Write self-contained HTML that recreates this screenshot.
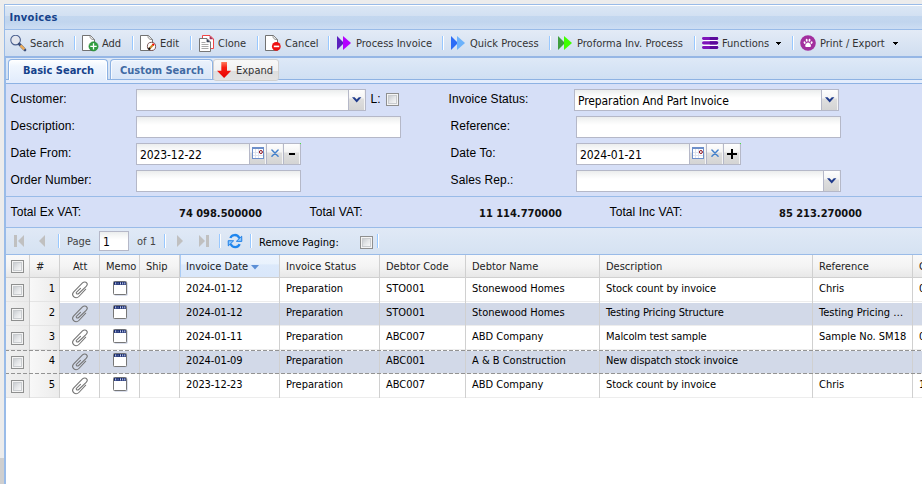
<!DOCTYPE html>
<html><head><meta charset="utf-8"><title>Invoices</title>
<style>
*{box-sizing:border-box;margin:0;padding:0}
html,body{width:922px;height:484px;overflow:hidden;background:#ececec}
body{position:relative;font-family:"DejaVu Sans Condensed","DejaVu Sans","Liberation Sans",sans-serif;font-size:11px;color:#222;font-stretch:condensed}
div,span,svg{position:absolute}
.t{white-space:nowrap;line-height:14px;height:14px}
  .a{font-family:"Liberation Sans",sans-serif;font-size:12px;color:#000;letter-spacing:0.08px;margin-left:-0.4px}
#hdr{left:5px;top:5px;width:917px;height:24px;background:linear-gradient(#fff 0,#fff 1px,#dbe7f5 1px,#d2e0f2 11px,#c3d7ef 11px,#c1d5ee 17px,#ccddf3 24px)}
#tb{left:5px;top:30px;width:917px;height:26px;background:linear-gradient(#e3ebf6,#d0def0)}
  .bt{top:37px;font-size:11px;color:#333}
.sep{top:36px;width:2px;height:14px;border-left:1px solid #98c8ff;border-right:1px solid #fff}
.inp{height:22px;border:1px solid #b5b8c8;background:#fff linear-gradient(#ebeded 0,#f6f7f7 4px,#fff 8px);}
.ft{font-size:12px;color:#000;line-height:16px;height:16px;white-space:nowrap}
.trg{width:17px;height:22px;border:1px solid #b5b8c8;border-left:0;background:linear-gradient(#fefefe 0,#f4f4f4 42%,#dfdfdf 43%,#d4d4d4 100%);box-shadow:inset -1px 0 0 #f4f4f4}
.tot{font-weight:bold;font-size:11px;color:#111}
.hd{top:260px;font-size:11px;color:#222;font-stretch:condensed}
.vl{top:255px;width:1px;height:143px;background:#d0d0d0}
.row{left:5px;width:917px;height:24px}
.c{font-size:11px;color:#000}
.d{letter-spacing:-0.1px}
.cb{width:13px;height:13px;border:1px solid #8e8f8f;background:linear-gradient(135deg,#c3c7cb 10%,#e4e6e8 50%,#fcfcfc 90%);box-shadow:inset 0 0 0 1px #f4f4f4, inset 0 0 0 2px #c9cccf}
</style></head><body>
<div style="left:4px;top:4px;width:920px;height:482px;border:1px solid #99bbe8;background:#fff"></div>
<div id="hdr"></div>
<div style="left:5px;top:29px;width:917px;height:1px;background:#99bbe8"></div>
<span class="t" style="left:9.5px;top:11px;font-weight:bold;color:#15428b;font-size:11px;letter-spacing:0.3px">Invoices</span>
<div id="tb"></div>
<div style="left:5px;top:56px;width:917px;height:1px;background:#95b6e5"></div>
<span class="t bt" style="left:30px">Search</span>
<span class="t bt" style="left:102px">Add</span>
<span class="t bt" style="left:160px">Edit</span>
<span class="t bt" style="left:218px">Clone</span>
<span class="t bt" style="left:285px">Cancel</span>
<span class="t bt" style="left:356px">Process Invoice</span>
<span class="t bt" style="left:470px">Quick Process</span>
<span class="t bt" style="left:577px">Proforma Inv. Process</span>
<span class="t bt" style="left:722px">Functions</span>
<span class="t bt" style="left:820px">Print / Export</span>
<div class="sep" style="left:74px"></div>
<div class="sep" style="left:132px"></div>
<div class="sep" style="left:190px"></div>
<div class="sep" style="left:257px"></div>
<div class="sep" style="left:328px"></div>
<div class="sep" style="left:442px"></div>
<div class="sep" style="left:549px"></div>
<div class="sep" style="left:694px"></div>
<div class="sep" style="left:792px"></div>
<svg style="left:776px;top:42px" width="5" height="3" viewBox="0 0 5 3" shape-rendering="crispEdges"><path d="M0 0h5v1h-1v1h-1v1h-1v-1h-1v-1h-1z" fill="#000"/></svg>
<svg style="left:893px;top:42px" width="5" height="3" viewBox="0 0 5 3" shape-rendering="crispEdges"><path d="M0 0h5v1h-1v1h-1v1h-1v-1h-1v-1h-1z" fill="#000"/></svg>
<div style="left:5px;top:57px;width:917px;height:1px;background:#95b6e5"></div>
<div style="left:5px;top:58px;width:917px;height:21px;background:linear-gradient(#dee9f7,#cfdff3)"></div>
<div style="left:5px;top:79px;width:917px;height:5px;background:#e4edfc;border-top:1px solid #8db2e3;border-bottom:1px solid #8db2e3"></div>
<div style="left:8px;top:59px;width:100px;height:21px;border:1px solid #8db2e3;border-bottom:0;border-radius:4px 4px 0 0;background:linear-gradient(#fff,#f0f6fe 30%,#e3edfc);box-shadow:inset 1px 1px 0 #fff,inset -1px 0 0 #fff"></div>
<span class="t" style="left:23px;top:64px;font-weight:bold;color:#15428b;font-size:11px">Basic Search</span>
<div style="left:110px;top:59px;width:103px;height:20px;border:1px solid #8db2e3;border-bottom:0;border-radius:4px 4px 0 0;background:linear-gradient(#ebf2fc,#d8e5f7);box-shadow:inset 1px 1px 0 #f5f9fe,inset -1px 0 0 #f5f9fe"></div>
<span class="t" style="left:120px;top:64px;font-weight:bold;color:#416aa3;font-size:11px">Custom Search</span>
<div style="left:213px;top:59px;width:66px;height:22px;border:1px solid #d0d0d0;border-radius:3px;background:linear-gradient(#f8f8f8 0,#f1f1f1 55%,#dedede 56%,#e2e2e2)"></div>
<span class="t" style="left:236px;top:64px;color:#333;font-size:11px">Expand</span>
<div style="left:5px;top:84px;width:917px;height:112px;background:#d6dff7"></div>
<div style="left:5px;top:196px;width:917px;height:1px;background:#99bbe8"></div>
<div style="left:5px;top:197px;width:917px;height:30px;background:#d6dff7"></div>
<div style="left:5px;top:227px;width:917px;height:1px;background:#99bbe8"></div>
<span class="t a" style="left:11px;top:92px">Customer:</span>
<span class="t a" style="left:11px;top:119px">Description:</span>
<span class="t a" style="left:11px;top:146px">Date From:</span>
<span class="t a" style="left:11px;top:173px">Order Number:</span>
<span class="t a" style="left:449px;top:92px">Invoice Status:</span>
<span class="t a" style="left:451px;top:119px">Reference:</span>
<span class="t a" style="left:451px;top:146px">Date To:</span>
<span class="t a" style="left:451px;top:173px">Sales Rep.:</span>
<span class="t a" style="left:371px;top:92px">L:</span>
<span class="t a" style="left:11px;top:205px">Total Ex VAT:</span>
<span class="t a" style="left:310px;top:205px">Total VAT:</span>
<span class="t a" style="left:610px;top:205px">Total Inc VAT:</span>
<span class="t tot" style="left:179px;top:207px">74 098.500000</span>
<span class="t tot" style="left:479px;top:207px">11 114.770000</span>
<span class="t tot" style="left:779px;top:207px">85 213.270000</span>
<div class="inp" style="left:136px;top:89px;width:213px"></div><div class="trg" style="left:349px;top:89px"></div>
<div class="inp" style="left:136px;top:116px;width:265px"></div>
<div class="inp" style="left:136px;top:143px;width:114px"></div>
<div class="inp" style="left:136px;top:170px;width:165px"></div>
<div class="inp" style="left:574px;top:89px;width:248px"></div><div class="trg" style="left:822px;top:89px"></div>
<div class="inp" style="left:576px;top:116px;width:265px"></div>
<div class="inp" style="left:576px;top:143px;width:114px"></div>
<div class="inp" style="left:576px;top:170px;width:248px"></div><div class="trg" style="left:824px;top:170px"></div>
<span class="ft" style="left:140px;top:147px;letter-spacing:-0.1px">2023-12-22</span>
<span class="ft" style="left:580px;top:147px;letter-spacing:-0.1px">2024-01-21</span>
<span class="ft" style="left:578px;top:93px;letter-spacing:-0.1px">Preparation And Part Invoice</span>
<div class="trg" style="left:250px;top:143px"></div>
<div class="trg" style="left:267px;top:143px"></div>
<div class="trg" style="left:284px;top:143px"></div>
<div class="trg" style="left:690px;top:143px"></div>
<div class="trg" style="left:707px;top:143px"></div>
<div class="trg" style="left:724px;top:143px"></div>
<div class="cb" style="left:386px;top:93px"></div>
<div style="left:5px;top:228px;width:917px;height:26px;background:linear-gradient(#e0e9f6,#d5e2f2)"></div>
<div style="left:5px;top:254px;width:917px;height:1px;background:#99bbe8"></div>
<div class="sep" style="left:58px;top:234px"></div>
<div class="sep" style="left:164px;top:234px"></div>
<div class="sep" style="left:219px;top:234px"></div>
<div class="sep" style="left:250px;top:234px"></div>
<div class="sep" style="left:377px;top:234px"></div>
<span class="t" style="left:67px;top:235px;color:#444">Page</span>
<div class="inp" style="left:99px;top:231px;width:30px;height:20px"></div>
<span class="t" style="left:103px;top:235px;color:#000;font-size:12px">1</span>
<span class="t" style="left:137px;top:235px;color:#444">of 1</span>
<span class="t" style="left:259px;top:236px;color:#000;font-family:"Liberation Sans",sans-serif;font-size:11px;letter-spacing:0.25px">Remove Paging:</span>
<div class="cb" style="left:360px;top:236px"></div>
<div style="left:5px;top:255px;width:917px;height:22px;background:linear-gradient(#f9f9f9,#f4f4f4 50%,#e8e8e8)"></div>
<div style="left:5px;top:277px;width:917px;height:1px;background:#d0d0d0"></div>
<div style="left:180px;top:255px;width:100px;height:22px;background:linear-gradient(#edf4fe 0,#e9f2fd 40%,#dce9fb 45%,#d9e7fa 100%);border:1px solid #aaccf6;border-top:0;border-bottom:0"></div>
<span class="t hd" style="left:36px">#</span>
<span class="t hd" style="left:73px">Att</span>
<span class="t hd" style="left:106px">Memo</span>
<span class="t hd" style="left:146px">Ship</span>
<span class="t hd" style="left:186px">Invoice Date</span>
<span class="t hd" style="left:286px">Invoice Status</span>
<span class="t hd" style="left:386px">Debtor Code</span>
<span class="t hd" style="left:472px">Debtor Name</span>
<span class="t hd" style="left:606px">Description</span>
<span class="t hd" style="left:819px">Reference</span>
<span class="t hd" style="left:919px">C</span>
<svg style="left:250.5px;top:265px" width="9" height="5" viewBox="0 0 9 5"><path d="M0 0h8L4 4.4z" fill="#5b8fd6"/></svg>
<div class="cb" style="left:11px;top:260px"></div>
<div class="row" style="top:278px;background:#fff;border-top:1px solid #fff;border-bottom:1px solid #ededed"></div>
<div class="row" style="top:302px;background:#d2d9e8;border-top:1px solid #fff;border-bottom:1px solid #ededed"></div>
<div class="row" style="top:326px;background:#fff;border-top:1px solid #fff;border-bottom:1px solid #ededed"></div>
<div class="row" style="top:350px;background:#d2d9e8;border-top:1px solid #fff;border-bottom:1px solid #ededed"></div>
<div class="row" style="top:374px;background:#fff;border-top:1px solid #fff;border-bottom:1px solid #ededed"></div>
<div style="left:6px;top:278px;width:24px;height:120px;background:linear-gradient(90deg,#f0f0f0,#eaeaea)"></div>
<div style="left:30px;top:278px;width:30px;height:120px;background:linear-gradient(90deg,#f8f8f8,#ebebeb)"></div>
<div style="left:0;top:458px;width:4px;height:26px;background:#cfcfcf"></div>
<div style="left:5px;top:301px;width:55px;height:1px;background:#e4e4e4"></div>
<div style="left:5px;top:325px;width:55px;height:1px;background:#e4e4e4"></div>
<div style="left:5px;top:349px;width:55px;height:1px;background:#e4e4e4"></div>
<div style="left:5px;top:397px;width:55px;height:1px;background:#e4e4e4"></div>
<div class="cb" style="left:11px;top:284px"></div>
<span class="t c" style="left:30px;width:25px;text-align:right;top:282px">1</span>
<span class="t c d" style="left:186px;top:282px">2024-01-12</span>
<span class="t c" style="left:286px;top:282px">Preparation</span>
<span class="t c" style="left:386px;top:282px">STO001</span>
<span class="t c" style="left:472px;top:282px">Stonewood Homes</span>
<span class="t c d" style="left:606px;top:282px">Stock count by invoice</span>
<span class="t c" style="left:819px;top:282px">Chris</span>
<span class="t c" style="left:919px;top:282px">0</span>
<svg style="left:68.4px;top:278.7px" width="24" height="22" viewBox="0 0 24 22"><path d="M17.7 10.2L10.9 17.5C9.2 19.3 6.6 19 5.4 17.4C4.2 15.9 4.4 14.4 5.5 13.2L14.5 3.9C15.9 2.5 17.8 2.7 18.7 3.9C19.7 5.1 19.3 6.3 18.2 7.3L10.7 14.5C9.9 15.3 9 15.2 8.5 14.6C8 14 8.1 13.6 8.6 13.2L12.5 9.3" fill="none" stroke="#757575" stroke-width="1.05" stroke-linecap="round"/></svg><svg style="left:113px;top:281px" width="16" height="16" viewBox="0 0 16 16"><rect x="1.3" y="1.3" width="13.4" height="13.4" rx="1.2" fill="#cdd4e6"/><rect x="0.5" y="0.5" width="13" height="13" rx="0.8" fill="#fff" stroke="#777" stroke-width="1"/><rect x="1" y="0.9" width="12" height="3" fill="#16296f"/><path d="M2.7 1.4V3.4M7.5 1.4V3.4M9.7 1.4V3.4M11.8 1.4V3.4" stroke="#dfe8ff" stroke-width="0.9"/><path d="M5.1 1.6V3.2" stroke="#7f8fc0" stroke-width="0.9"/></svg>
<div class="cb" style="left:11px;top:308px"></div>
<span class="t c" style="left:30px;width:25px;text-align:right;top:306px">2</span>
<span class="t c d" style="left:186px;top:306px">2024-01-12</span>
<span class="t c" style="left:286px;top:306px">Preparation</span>
<span class="t c" style="left:386px;top:306px">STO001</span>
<span class="t c" style="left:472px;top:306px">Stonewood Homes</span>
<span class="t c d" style="left:606px;top:306px">Testing Pricing Structure</span>
<span class="t c" style="left:819px;top:306px">Testing Pricing …</span>
<svg style="left:68.4px;top:302.7px" width="24" height="22" viewBox="0 0 24 22"><path d="M17.7 10.2L10.9 17.5C9.2 19.3 6.6 19 5.4 17.4C4.2 15.9 4.4 14.4 5.5 13.2L14.5 3.9C15.9 2.5 17.8 2.7 18.7 3.9C19.7 5.1 19.3 6.3 18.2 7.3L10.7 14.5C9.9 15.3 9 15.2 8.5 14.6C8 14 8.1 13.6 8.6 13.2L12.5 9.3" fill="none" stroke="#757575" stroke-width="1.05" stroke-linecap="round"/></svg><svg style="left:113px;top:305px" width="16" height="16" viewBox="0 0 16 16"><rect x="1.3" y="1.3" width="13.4" height="13.4" rx="1.2" fill="#cdd4e6"/><rect x="0.5" y="0.5" width="13" height="13" rx="0.8" fill="#fff" stroke="#777" stroke-width="1"/><rect x="1" y="0.9" width="12" height="3" fill="#16296f"/><path d="M2.7 1.4V3.4M7.5 1.4V3.4M9.7 1.4V3.4M11.8 1.4V3.4" stroke="#dfe8ff" stroke-width="0.9"/><path d="M5.1 1.6V3.2" stroke="#7f8fc0" stroke-width="0.9"/></svg>
<div class="cb" style="left:11px;top:332px"></div>
<span class="t c" style="left:30px;width:25px;text-align:right;top:330px">3</span>
<span class="t c d" style="left:186px;top:330px">2024-01-11</span>
<span class="t c" style="left:286px;top:330px">Preparation</span>
<span class="t c" style="left:386px;top:330px">ABC007</span>
<span class="t c" style="left:472px;top:330px">ABD Company</span>
<span class="t c d" style="left:606px;top:330px">Malcolm test sample</span>
<span class="t c" style="left:819px;top:330px">Sample No. SM18</span>
<span class="t c" style="left:919px;top:330px">0</span>
<svg style="left:68.4px;top:326.7px" width="24" height="22" viewBox="0 0 24 22"><path d="M17.7 10.2L10.9 17.5C9.2 19.3 6.6 19 5.4 17.4C4.2 15.9 4.4 14.4 5.5 13.2L14.5 3.9C15.9 2.5 17.8 2.7 18.7 3.9C19.7 5.1 19.3 6.3 18.2 7.3L10.7 14.5C9.9 15.3 9 15.2 8.5 14.6C8 14 8.1 13.6 8.6 13.2L12.5 9.3" fill="none" stroke="#757575" stroke-width="1.05" stroke-linecap="round"/></svg><svg style="left:113px;top:329px" width="16" height="16" viewBox="0 0 16 16"><rect x="1.3" y="1.3" width="13.4" height="13.4" rx="1.2" fill="#cdd4e6"/><rect x="0.5" y="0.5" width="13" height="13" rx="0.8" fill="#fff" stroke="#777" stroke-width="1"/><rect x="1" y="0.9" width="12" height="3" fill="#16296f"/><path d="M2.7 1.4V3.4M7.5 1.4V3.4M9.7 1.4V3.4M11.8 1.4V3.4" stroke="#dfe8ff" stroke-width="0.9"/><path d="M5.1 1.6V3.2" stroke="#7f8fc0" stroke-width="0.9"/></svg>
<div class="cb" style="left:11px;top:356px"></div>
<span class="t c" style="left:30px;width:25px;text-align:right;top:354px">4</span>
<span class="t c d" style="left:186px;top:354px">2024-01-09</span>
<span class="t c" style="left:286px;top:354px">Preparation</span>
<span class="t c" style="left:386px;top:354px">ABC001</span>
<span class="t c" style="left:472px;top:354px">A &amp; B Construction</span>
<span class="t c d" style="left:606px;top:354px">New dispatch stock invoice</span>
<svg style="left:68.4px;top:350.7px" width="24" height="22" viewBox="0 0 24 22"><path d="M17.7 10.2L10.9 17.5C9.2 19.3 6.6 19 5.4 17.4C4.2 15.9 4.4 14.4 5.5 13.2L14.5 3.9C15.9 2.5 17.8 2.7 18.7 3.9C19.7 5.1 19.3 6.3 18.2 7.3L10.7 14.5C9.9 15.3 9 15.2 8.5 14.6C8 14 8.1 13.6 8.6 13.2L12.5 9.3" fill="none" stroke="#757575" stroke-width="1.05" stroke-linecap="round"/></svg><svg style="left:113px;top:353px" width="16" height="16" viewBox="0 0 16 16"><rect x="1.3" y="1.3" width="13.4" height="13.4" rx="1.2" fill="#cdd4e6"/><rect x="0.5" y="0.5" width="13" height="13" rx="0.8" fill="#fff" stroke="#777" stroke-width="1"/><rect x="1" y="0.9" width="12" height="3" fill="#16296f"/><path d="M2.7 1.4V3.4M7.5 1.4V3.4M9.7 1.4V3.4M11.8 1.4V3.4" stroke="#dfe8ff" stroke-width="0.9"/><path d="M5.1 1.6V3.2" stroke="#7f8fc0" stroke-width="0.9"/></svg>
<div class="cb" style="left:11px;top:380px"></div>
<span class="t c" style="left:30px;width:25px;text-align:right;top:378px">5</span>
<span class="t c d" style="left:186px;top:378px">2023-12-23</span>
<span class="t c" style="left:286px;top:378px">Preparation</span>
<span class="t c" style="left:386px;top:378px">ABC007</span>
<span class="t c" style="left:472px;top:378px">ABD Company</span>
<span class="t c d" style="left:606px;top:378px">Stock count by invoice</span>
<span class="t c" style="left:819px;top:378px">Chris</span>
<span class="t c" style="left:919px;top:378px">1</span>
<svg style="left:68.4px;top:374.7px" width="24" height="22" viewBox="0 0 24 22"><path d="M17.7 10.2L10.9 17.5C9.2 19.3 6.6 19 5.4 17.4C4.2 15.9 4.4 14.4 5.5 13.2L14.5 3.9C15.9 2.5 17.8 2.7 18.7 3.9C19.7 5.1 19.3 6.3 18.2 7.3L10.7 14.5C9.9 15.3 9 15.2 8.5 14.6C8 14 8.1 13.6 8.6 13.2L12.5 9.3" fill="none" stroke="#757575" stroke-width="1.05" stroke-linecap="round"/></svg><svg style="left:113px;top:377px" width="16" height="16" viewBox="0 0 16 16"><rect x="1.3" y="1.3" width="13.4" height="13.4" rx="1.2" fill="#cdd4e6"/><rect x="0.5" y="0.5" width="13" height="13" rx="0.8" fill="#fff" stroke="#777" stroke-width="1"/><rect x="1" y="0.9" width="12" height="3" fill="#16296f"/><path d="M2.7 1.4V3.4M7.5 1.4V3.4M9.7 1.4V3.4M11.8 1.4V3.4" stroke="#dfe8ff" stroke-width="0.9"/><path d="M5.1 1.6V3.2" stroke="#7f8fc0" stroke-width="0.9"/></svg>
<div class="vl" style="left:29px"></div>
<div class="vl" style="left:59px"></div>
<div class="vl" style="left:99px"></div>
<div class="vl" style="left:139px"></div>
<div class="vl" style="left:179px"></div>
<div class="vl" style="left:279px"></div>
<div class="vl" style="left:379px"></div>
<div class="vl" style="left:465px"></div>
<div class="vl" style="left:599px"></div>
<div class="vl" style="left:812px"></div>
<div class="vl" style="left:912px"></div>
<div style="left:5px;top:350px;width:917px;height:1px;background:repeating-linear-gradient(90deg,#939393 0,#939393 3.6px,transparent 3.6px,transparent 6px)"></div>
<div style="left:5px;top:373px;width:917px;height:1px;background:repeating-linear-gradient(90deg,#939393 0,#939393 3.6px,transparent 3.6px,transparent 6px)"></div>
<div style="left:5px;top:57px;width:1px;height:430px;background:#99bbe8"></div>
<div style="left:300px;top:143px;width:1px;height:1px;background:#4be04b"></div><div style="left:740px;top:143px;width:1px;height:1px;background:#4be04b"></div>
<svg style="left:10px;top:35px" width="17" height="17" viewBox="0 0 17 17"><circle cx="5.6" cy="5.1" r="4.8" fill="#e3e6ee" stroke="#4a5f8e" stroke-width="1.1"/><path d="M9.2 9L15 15" stroke="#3d4f7a" stroke-width="2.7" stroke-linecap="round"/><path d="M10.5 10.4L14.4 14.4" stroke="#eaaa58" stroke-width="2.4"/></svg><svg style="left:82px;top:35px" width="18" height="17" viewBox="0 0 18 17"><path d="M0.5 0.5H8.5L12.5 4.5V15.5H0.5Z" fill="#fff" stroke="#6a6a6a" stroke-width="0.95"/><path d="M8.2 0.8C7.6 2.6 8.8 4.6 12.2 4.6" fill="#ececec" stroke="#777" stroke-width="0.8"/><circle cx="11.5" cy="11.4" r="4.6" fill="#2f9e3f" stroke="#258a35" stroke-width="0.6"/><path d="M11.5 8.2V14.6M8.3 11.4H14.7" stroke="#fff" stroke-width="1.3"/></svg><svg style="left:140px;top:35px" width="18" height="17" viewBox="0 0 18 17"><path d="M0.5 0.5H8.5L12.5 4.5V15.5H0.5Z" fill="#fff" stroke="#6a6a6a" stroke-width="0.95"/><path d="M8.2 0.8C7.6 2.6 8.8 4.6 12.2 4.6" fill="#ececec" stroke="#777" stroke-width="0.8"/><circle cx="11.5" cy="11.4" r="4.1" fill="#fff" stroke="#6e4444" stroke-width="0.9"/><path d="M9.1 13.9L13.6 9.2" stroke="#c8892c" stroke-width="2.1"/><path d="M12.8 10.1L13.9 8.9" stroke="#f00" stroke-width="2.1"/><path d="M8.6 14.4L9.9 13.1" stroke="#111" stroke-width="2.1"/></svg><svg style="left:199px;top:34.5px" width="16" height="17" viewBox="0 0 16 17"><path d="M3.5 0.5H11L14.5 4V13.5H3.5Z" fill="#fff" stroke="#f04545" stroke-width="1"/><path d="M10.6 0.6V4.2H14.3Z" fill="#a8325a"/><path d="M0.5 3.5H8L11.5 7V16.5H0.5Z" fill="#fff" stroke="#707070" stroke-width="0.95"/><path d="M7.6 3.6V7.3H11.3Z" fill="#3a4458"/><path d="M2.5 7.5H6.5M2.5 9.5H9.5M2.5 11.5H9.5M2.5 13.5H9.5" stroke="#aaa" stroke-width="1"/></svg><svg style="left:265px;top:35px" width="18" height="17" viewBox="0 0 18 17"><path d="M0.5 0.5H8.5L12.5 4.5V15.5H0.5Z" fill="#fff" stroke="#6a6a6a" stroke-width="0.95"/><path d="M8.2 0.8C7.6 2.6 8.8 4.6 12.2 4.6" fill="#ececec" stroke="#777" stroke-width="0.8"/><circle cx="11.3" cy="11.4" r="4.4" fill="#ee1111"/><path d="M8.8 11.4H14.2" stroke="#fff" stroke-width="1.6"/></svg><svg style="left:336px;top:35px" width="16" height="16" viewBox="0 0 16 16"><path d="M1 1L8 8L1 15Z" fill="#5a20be"/><path d="M7 1L15 8L7 15Z" fill="#b400ff"/></svg><svg style="left:450px;top:35px" width="16" height="16" viewBox="0 0 16 16"><path d="M1 1L8 8L1 15Z" fill="#2c6cf6"/><path d="M7 1L15 8L7 15Z" fill="#6cb2fb"/></svg><svg style="left:557px;top:35px" width="16" height="16" viewBox="0 0 16 16"><path d="M1 1L8 8L1 15Z" fill="#3f9e3f"/><path d="M7 1L15 8L7 15Z" fill="#40ff00"/></svg><svg style="left:702px;top:37px" width="17" height="12" viewBox="0 0 17 12"><rect x="0.6" y="1.5" width="15" height="9" fill="#fff"/><rect x="0" y="0.1" width="16.2" height="2.8" rx="1.4" fill="#7e14ba"/><path d="M7.8 0.1H14.799999999999999A1.4 1.4 0 0 1 14.799999999999999 2.9H7.8Z" fill="#5a0a9b"/><rect x="0" y="4.2" width="16.2" height="3.2" rx="1.6" fill="#7e14ba"/><path d="M7.8 4.2H14.6A1.6 1.6 0 0 1 14.6 7.4H7.8Z" fill="#5a0a9b"/><rect x="0" y="9.0" width="16.2" height="2.9" rx="1.45" fill="#7e14ba"/><path d="M7.8 9.0H14.75A1.45 1.45 0 0 1 14.75 11.9H7.8Z" fill="#5a0a9b"/></svg><svg style="left:800px;top:34.8px" width="16" height="16" viewBox="0 0 16 16"><circle cx="8" cy="8" r="7.8" fill="#a22e9e"/><ellipse cx="4.6" cy="7.6" rx="0.95" ry="1.35" fill="#fff" transform="rotate(-25 4.6 7.6)"/><ellipse cx="6.7" cy="5.3" rx="0.95" ry="1.45" fill="#fff" transform="rotate(-8 6.7 5.3)"/><ellipse cx="9.5" cy="5.3" rx="0.95" ry="1.45" fill="#fff" transform="rotate(8 9.5 5.3)"/><ellipse cx="11.6" cy="7.6" rx="0.95" ry="1.35" fill="#fff" transform="rotate(25 11.6 7.6)"/><path d="M8.1 7.6C9.6 7.6 11 9.6 11 11C11 12.2 9.8 12 8.1 12C6.4 12 5.2 12.2 5.2 11C5.2 9.6 6.6 7.6 8.1 7.6Z" fill="#fff"/></svg><svg style="left:217px;top:62px" width="15" height="16" viewBox="0 0 15 16"><defs><linearGradient id="rg" x1="0" y1="0" x2="0" y2="1"><stop offset="0" stop-color="#ff7a5c"/><stop offset="0.35" stop-color="#f81e12"/><stop offset="1" stop-color="#e60000"/></linearGradient></defs><path d="M4.3 0H10V8.7H14.2L7.1 16L0 8.7H4.3Z" fill="url(#rg)"/></svg><svg style="left:352px;top:97px" width="10" height="6" viewBox="0 0 10 6"><path d="M0 0.3H2.6L4.7 2.6L6.8 0.3H9.4L4.7 5.6Z" fill="#1f3b8c"/></svg><svg style="left:825px;top:97px" width="10" height="6" viewBox="0 0 10 6"><path d="M0 0.3H2.6L4.7 2.6L6.8 0.3H9.4L4.7 5.6Z" fill="#1f3b8c"/></svg><svg style="left:827px;top:178px" width="10" height="6" viewBox="0 0 10 6"><path d="M0 0.3H2.6L4.7 2.6L6.8 0.3H9.4L4.7 5.6Z" fill="#1f3b8c"/></svg><svg style="left:252px;top:147px" width="12" height="12" viewBox="0 0 12 12"><rect x="0.5" y="0.5" width="11" height="11" fill="#fff" stroke="#6d8fc9" stroke-width="1"/><rect x="0" y="0" width="12" height="2" fill="#6d8fc9"/><path d="M3.5 2V11M6.5 2V11M1 5.5H11M1 8.5H11" stroke="#dfe4ee" stroke-width="1"/><circle cx="8.9" cy="5" r="1.5" fill="#fff" stroke="#8e0f1a" stroke-width="1"/></svg><svg style="left:269.5px;top:147.5px" width="10" height="10" viewBox="0 0 10 10"><path d="M1.9 1.9L8.1 8.3M8.1 1.9L1.9 8.3" stroke="#4480cb" stroke-width="1.45" stroke-linecap="round"/></svg><svg style="left:692px;top:147px" width="12" height="12" viewBox="0 0 12 12"><rect x="0.5" y="0.5" width="11" height="11" fill="#fff" stroke="#6d8fc9" stroke-width="1"/><rect x="0" y="0" width="12" height="2" fill="#6d8fc9"/><path d="M3.5 2V11M6.5 2V11M1 5.5H11M1 8.5H11" stroke="#dfe4ee" stroke-width="1"/><circle cx="8.9" cy="5" r="1.5" fill="#fff" stroke="#8e0f1a" stroke-width="1"/></svg><svg style="left:709.5px;top:147.5px" width="10" height="10" viewBox="0 0 10 10"><path d="M1.9 1.9L8.1 8.3M8.1 1.9L1.9 8.3" stroke="#4480cb" stroke-width="1.45" stroke-linecap="round"/></svg><div style="left:289px;top:153px;width:6px;height:2px;background:#000"></div><div style="left:727px;top:153px;width:10px;height:2px;background:#000"></div><div style="left:731px;top:149px;width:2px;height:10px;background:#000"></div><svg style="left:14px;top:235px" width="11" height="12" viewBox="0 0 11 12"><rect x="0" y="0" width="3" height="12" fill="#c0c0c0"/><path d="M10 0V12L4 6Z" fill="#c0c0c0"/></svg><svg style="left:39px;top:235px" width="6" height="12" viewBox="0 0 6 12"><path d="M6 0V12L0 6Z" fill="#c0c0c0"/></svg><svg style="left:177px;top:235px" width="6" height="12" viewBox="0 0 6 12"><path d="M0 0V12L6 6Z" fill="#c0c0c0"/></svg><svg style="left:199px;top:235px" width="10" height="12" viewBox="0 0 10 12"><path d="M0 0V12L6 6Z" fill="#c0c0c0"/><rect x="7" y="0" width="3" height="12" fill="#c0c0c0"/></svg><svg style="left:222px;top:230px" width="26" height="22" viewBox="0 0 26 22"><path d="M8.4 8C9.6 4.4 15.4 3.6 17.4 8.2" fill="none" stroke="#1f86ee" stroke-width="2.3"/><path d="M19.7 6.2L19.8 11.4L14.4 11.3Z" fill="#8ac6ff" stroke="#1f7fe6" stroke-width="1" stroke-linejoin="round"/><path d="M17.6 14.2C16.4 17.8 10.6 18.4 8.6 13.9" fill="none" stroke="#1f86ee" stroke-width="2.3"/><path d="M6.3 15.9L6.2 10.7L11.6 10.8Z" fill="#8ac6ff" stroke="#1f7fe6" stroke-width="1" stroke-linejoin="round"/></svg>
</body></html>
